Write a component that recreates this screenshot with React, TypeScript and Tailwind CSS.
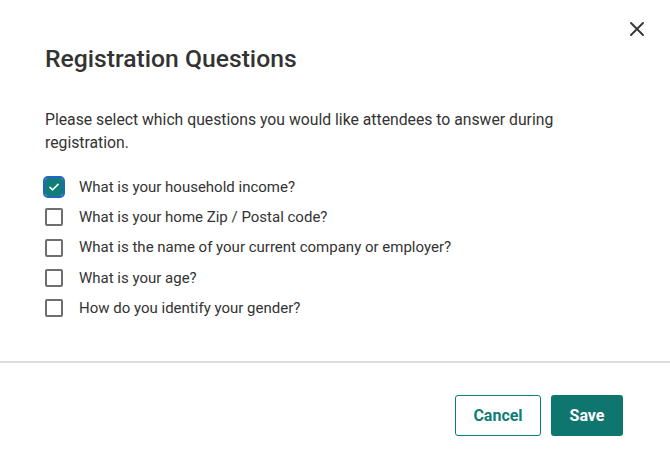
import { useState } from 'react'

const questions = [
  'What is your household income?',
  'What is your home Zip / Postal code?',
  'What is the name of your current company or employer?',
  'What is your age?',
  'How do you identify your gender?',
]

export default function App() {
  const [checked, setChecked] = useState<boolean[]>([true, false, false, false, false])

  const toggle = (i: number) => {
    setChecked((prev) => prev.map((v, j) => (j === i ? !v : v)))
  }

  return (
    <div className="w-[670px] h-[458px] bg-white flex flex-col font-['Roboto',sans-serif] text-[#2b2b2b] overflow-hidden">
      <div className="flex flex-col pl-[45px] pr-[24px] pt-[43px] relative">
        <button className="absolute right-[23px] top-[19px] w-[20px] h-[20px] flex items-center justify-center text-[#333]" title="Close">
          <svg xmlns="http://www.w3.org/2000/svg" className="w-[14px] h-[14px]" viewBox="0 0 14 14" fill="none" stroke="currentColor" strokeWidth="1.8">
            <path strokeLinecap="round" d="M1 1l12 12M13 1L1 13" />
          </svg>
        </button>
        <h1 className="text-[24.7px] leading-[32px] font-medium text-[#333]">Registration Questions</h1>
        <p className="mt-[33px] text-[15.75px] leading-[23px] pr-[80px] text-[#333]">
          Please select which questions you would like attendees to answer during registration.
        </p>
        <div className="mt-[18px] flex flex-col">
          {questions.map((q, i) => (
            <label key={q} className="flex items-center h-[30.3px] gap-[16px] cursor-pointer" onClick={() => toggle(i)}>
              {checked[i] ? (
                <span className="w-[18px] h-[18px] rounded-[3px] bg-[#0f7e76] flex items-center justify-center outline-2 outline-[#2563c9] outline-offset-0">
                  <svg xmlns="http://www.w3.org/2000/svg" className="w-[12px] h-[12px]" viewBox="0 0 12 12" fill="none" stroke="white" strokeWidth="1.6">
                    <path strokeLinecap="round" strokeLinejoin="round" d="M2 6.3l2.6 2.5L10 3.4" />
                  </svg>
                </span>
              ) : (
                <span className="w-[18px] h-[18px] rounded-[2px] border-2 border-[#6f6f6f] bg-white" />
              )}
              <span className="text-[15px] text-[#333]">{q}</span>
            </label>
          ))}
        </div>
      </div>
      <div className="mt-[38px] border-t-2 border-[#dcdcdc]" />
      <div className="flex justify-end gap-[10px] pr-[47px] pt-[32px]">
        <button className="h-[41px] w-[86px] rounded-[3px] border border-[#0f7e76] bg-white text-[#0f7e76] text-[16px] font-bold">
          Cancel
        </button>
        <button className="h-[41px] w-[72px] rounded-[3px] bg-[#0f766f] text-white text-[16px] font-bold">
          Save
        </button>
      </div>
    </div>
  )
}
